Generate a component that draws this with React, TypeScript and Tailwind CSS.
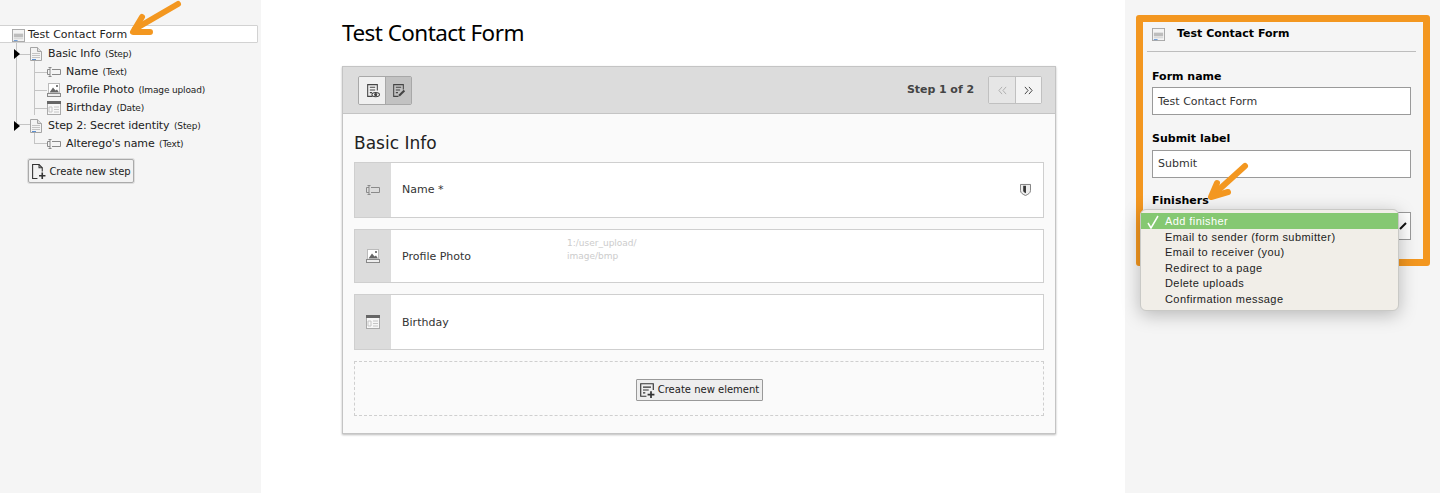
import type { ReactNode } from "react";

const verdana = "font-['DejaVu_Sans',sans-serif]";

function FormIcon({ className = "" }: { className?: string }) {
  return (
    <svg viewBox="0 0 14 14" className={className}>
      <rect x="0.5" y="0.5" width="13" height="13" fill="#f4f4f4" stroke="#a5a5a5" />
      <rect x="2" y="5" width="10" height="4" fill="#bdbdbd" />
      <rect x="2" y="10" width="10" height="1" fill="#d0d0d0" />
      <rect x="2" y="12" width="4" height="1" fill="#5b8fd0" />
    </svg>
  );
}

function PageIcon() {
  return (
    <svg viewBox="0 0 12 14" className="h-[14px] w-[12px] shrink-0">
      <path d="M.5.5h7l4 4v9H.5z" fill="#f3f3f3" stroke="#a5a5a5" />
      <path d="M7.5.5v4h4" fill="#ddd" stroke="#a5a5a5" />
      <path d="M2 6.5h8M2 8.5h8M2 10.5h8" stroke="#c4c4c4" />
      <path d="M2 12.5h4" stroke="#5b8fd0" />
    </svg>
  );
}

function TextIcon({ color = "#8a8a8a" }: { color?: string }) {
  return (
    <svg viewBox="0 0 14 10" className="h-[10px] w-[14px] shrink-0" fill="none" stroke={color}>
      <path d="M5 2.5h8.5v5H5" />
      <path d="M1.500.5h3M3 .5v9M1.500 9.500h3M.5 2.500H3M.5 7.500H3M.5 2.500v5" />
    </svg>
  );
}

function ImageIcon() {
  return (
    <svg viewBox="0 0 14 14" className="h-[14px] w-[14px] shrink-0">
      <rect x="1.5" y="0.5" width="11" height="10" fill="#fff" stroke="#bbb" />
      <path d="M2.500 9.500 6 4.500l2.500 3 1.500-1 2 3z" fill="#666" />
      <circle cx="10" cy="3" r="1" fill="#555" />
      <rect x="0.5" y="10.500" width="13" height="3" fill="#eee" stroke="#888" />
    </svg>
  );
}

function DateIcon() {
  return (
    <svg viewBox="0 0 14 14" className="h-[14px] w-[14px] shrink-0">
      <rect x="0.5" y="0.5" width="13" height="13" fill="#f7f7f7" stroke="#aaa" />
      <rect x="0" y="0" width="14" height="3" fill="#666" />
      <path d="M2 6h3v5H2z" fill="none" stroke="#c6c6c6" />
      <path d="M7 6h5M7 8.500h5M7 11h5" stroke="#c6c6c6" />
    </svg>
  );
}

function Twisty() {
  return <span className="block h-0 w-0 border-y-[5px] border-l-[6px] border-y-transparent border-l-black" />;
}

function TreeRow({
  left,
  icon,
  label,
  kind,
  arrow,
}: {
  left: string;
  icon: ReactNode;
  label: string;
  kind: string;
  arrow?: boolean;
}) {
  return (
    <div className={`relative flex h-[18px] items-center gap-[5px] ${left}`}>
      {arrow && (
        <span className="absolute left-[-15px] top-1/2 flex -translate-y-1/2">
          <Twisty />
        </span>
      )}
      <span className="flex w-[14px] justify-center">{icon}</span>
      <span className="whitespace-nowrap text-[11px] tracking-[-0.08px] text-[#222]">
        {label} <span className="ml-[1px] text-[9px] tracking-[-0.15px]">{kind}</span>
      </span>
    </div>
  );
}

function LeftTree() {
  return (
    <aside className={`relative w-[261px] shrink-0 bg-[#f5f5f5] pt-[25px] ${verdana}`}>
      <div className="ml-[-2px] flex h-[18px] w-[260px] items-center rounded-r-[1px] border border-[#d2d2d2] bg-white pl-[13px] pt-[3px] text-[11px] text-[#222]">
        <FormIcon className="mr-[3px] h-[13px] w-[13px]" />
        Test Contact Form
      </div>
      <div className="relative pl-[30px]">
        {/* tree connector lines */}
        <span className="absolute left-[16px] top-0 h-[82px] w-px bg-[#c4c4c4]" />
        <span className="absolute left-[16px] top-[11px] h-px w-[14px] bg-[#c4c4c4]" />
        <span className="absolute left-[16px] top-[81px] h-px w-[14px] bg-[#c4c4c4]" />
        <span className="absolute left-[34px] top-[18px] h-[54px] w-px bg-[#c4c4c4]" />
        <span className="absolute left-[34px] top-[29px] h-px w-[13px] bg-[#c4c4c4]" />
        <span className="absolute left-[34px] top-[47px] h-px w-[13px] bg-[#c4c4c4]" />
        <span className="absolute left-[34px] top-[65px] h-px w-[13px] bg-[#c4c4c4]" />
        <span className="absolute left-[34px] top-[90px] h-[10px] w-px bg-[#c4c4c4]" />
        <span className="absolute left-[34px] top-[100px] h-px w-[13px] bg-[#c4c4c4]" />
        <div className="pt-[2px]">
          <TreeRow left="ml-[-1px]" arrow icon={<PageIcon />} label="Basic Info" kind="(Step)" />
          <TreeRow left="ml-[17px]" icon={<TextIcon />} label="Name" kind="(Text)" />
          <TreeRow left="ml-[17px]" icon={<ImageIcon />} label="Profile Photo" kind="(Image upload)" />
          <TreeRow left="ml-[17px]" icon={<DateIcon />} label="Birthday" kind="(Date)" />
          <TreeRow left="ml-[-1px]" arrow icon={<PageIcon />} label="Step 2: Secret identity" kind="(Step)" />
          <TreeRow left="ml-[17px]" icon={<TextIcon />} label="Alterego's name" kind="(Text)" />
        </div>
      </div>
      <button className="ml-[28px] mt-[6px] flex h-[24px] w-[106px] items-center justify-center gap-[3px] rounded-[2px] border border-[#aaa] bg-[#f2f2f2] text-[10px] tracking-[-0.05px] text-[#222] shadow-[0_0_0_1px_#ddd]">
        <svg viewBox="0 0 14 14" className="h-[15px] w-[15px]" fill="none" stroke="#333">
          <path d="M6 13.500H1.500V.5h6l3 3V7" />
          <path d="M7.500.5v3h3" />
          <path d="M10.500 8v6M7.500 11h6" strokeWidth="1.500" />
        </svg>
        Create new step
      </button>
    </aside>
  );
}

function ElementRow({
  h,
  icon,
  label,
  pad = "",
  children,
}: {
  h: string;
  icon: ReactNode;
  label: string;
  pad?: string;
  children?: ReactNode;
}) {
  return (
    <div className={`relative flex ${h} border border-[#cfcfcf] bg-white`}>
      <div className="flex w-[36px] shrink-0 items-center justify-center bg-[#dcdcdc]">{icon}</div>
      <div className={`flex flex-1 items-center pl-[11px] text-[11px] text-[#333] ${pad}`}>{label}</div>
      {children}
    </div>
  );
}

function MainStage() {
  return (
    <main className="flex-1 pl-[81px] pt-[18px]">
      <h1 className="h-[30px] font-['Noto_Sans',sans-serif] text-[22.500px] leading-[29px] tracking-[-0.55px] text-black">
        Test Contact Form
      </h1>
      <div className={`mt-[18px] w-[714px] border border-[#c4c4c4] bg-[#fafafa] pb-[17px] shadow-[0_1px_2px_#bbb] ${verdana}`}>
        <div className="flex h-[47px] items-center border-b border-[#c4c4c4] bg-[#dcdcdc] pl-[15px] pr-[13px]">
          <div className="flex h-[29px] overflow-hidden rounded-[2px] border border-[#a8a8a8]">
            <button className="flex w-[26px] items-center justify-center bg-[#f0f0f0]">
              <svg viewBox="0 0 14 14" className="h-[15px] w-[15px]" fill="none" stroke="#444">
                <path d="M7 12.500H2.500v-11h9V7" />
                <path d="M4.500 4h5M4.500 6.500h5M4.500 9h2" />
                <ellipse cx="10" cy="10.800" rx="3.500" ry="2" fill="#fff" />
                <circle cx="10" cy="10.800" r="1" fill="#444" />
              </svg>
            </button>
            <button className="flex w-[26px] items-center justify-center border-l border-[#a8a8a8] bg-[#c2c2c2]">
              <svg viewBox="0 0 14 14" className="h-[15px] w-[15px]" fill="none" stroke="#444">
                <path d="M7 12.500H2.500v-11h9V6" />
                <path d="M4.500 4h5M4.500 6.500h4M4.500 9h2" />
                <path d="m7.500 12 5-5" strokeWidth="2" />
              </svg>
            </button>
          </div>
          <div className="ml-auto mr-[14px] text-[11px] font-bold tracking-[-0.05px] text-[#444]">Step 1 of 2</div>
          <div className="flex h-[28px] rounded-[2px] border border-[#c0c0c0]">
            <button className="flex w-[26px] items-center justify-center bg-[#e6e6e6] text-[#aaa]">
              <svg viewBox="0 0 10 10" className="h-[9px] w-[9px]" fill="none" stroke="currentColor">
                <path d="M4.500 1 1 5l3.500 4M9 1 5.500 5 9 9" />
              </svg>
            </button>
            <button className="flex w-[26px] items-center justify-center border-l border-[#c0c0c0] bg-[#f4f4f4] text-[#333]">
              <svg viewBox="0 0 10 10" className="h-[9px] w-[9px]" fill="none" stroke="currentColor">
                <path d="m1 1 3.500 4L1 9M5.500 1 9 5 5.500 9" />
              </svg>
            </button>
          </div>
        </div>
        <div className="px-[11px] pt-[18px]">
          <h2 className="mb-[7px] h-[23px] text-[17px] leading-[23px] text-[#222]">Basic Info</h2>
          <div className="flex flex-col gap-[11px]">
            <ElementRow h="h-[56px]" icon={<TextIcon />} label="Name *">
              <svg viewBox="0 0 12 14" className="absolute right-[12px] top-[20px] h-[13px] w-[11px]">
                <path d="M.5 1.500h11V8c0 3-3 4.500-5.500 5.500C3.500 12.500.5 11 .5 8z" fill="#eee" stroke="#777" />
                <path d="M3.500 3h3v8c-1.500-.5-3-1.500-3-3z" fill="#333" />
              </svg>
            </ElementRow>
            <ElementRow h="h-[54px]" pad="pt-[2px]" icon={<ImageIcon />} label="Profile Photo">
              <div className="absolute left-[212px] top-[7px] text-[9px] leading-[13px] text-[#ccc]">
                1:/user_upload/
                <br />
                image/bmp
              </div>
            </ElementRow>
            <ElementRow h="h-[56px]" pad="pt-[2px]" icon={<DateIcon />} label="Birthday" />
            <div className="flex h-[55px] items-center justify-center border border-dashed border-[#cfcfcf] pt-[2px]">
              <button className="flex h-[22px] w-[127px] items-center justify-center gap-[3px] rounded-[1px] border border-[#999] bg-[#eee] text-[10px] text-[#222]">
                <svg viewBox="0 0 14 14" className="h-[16px] w-[16px]" fill="none" stroke="#333">
                  <path d="M6.500 12.500h-5v-11h11V7" />
                  <path d="M3.500 4.500h7M3.500 7h5M3.500 9.500h2" />
                  <path d="M10.500 8v6M7.500 11h6" strokeWidth="1.500" />
                </svg>
                Create new element
              </button>
            </div>
          </div>
        </div>
      </div>
    </main>
  );
}

function TextField({
  label,
  value,
  mt,
  gap,
  pad = "",
}: {
  label: string;
  value: string;
  mt: string;
  gap: string;
  pad?: string;
}) {
  return (
    <div className={mt}>
      <div className="h-[14px] text-[11px] font-bold leading-[14px] text-black">{label}</div>
      <div className={`${gap} ${pad} flex h-[28px] w-[259px] items-center border border-[#9a9a9a] bg-white pl-[5px] text-[11px] text-[#333]`}>
        {value}
      </div>
    </div>
  );
}

function FinisherMenu() {
  const items = [
    "Email to sender (form submitter)",
    "Email to receiver (you)",
    "Redirect to a page",
    "Delete uploads",
    "Confirmation message",
  ];
  return (
    <div className="absolute left-[1140px] top-[209px] h-[102px] w-[259px] rounded-[6px] border border-[#c9c9c6] bg-[#f1eee8] pt-[3px] font-['Liberation_Sans',sans-serif] text-[11px] tracking-[0.42px] text-[#222] shadow-[0_4px_18px_rgba(0,0,0,0.25)]">
      <div className="relative flex h-[16px] items-center bg-[#85c872] pl-[24px] text-white">
        <svg viewBox="0 0 12 14" className="absolute left-[6px] top-[2px] h-[14px] w-[12px]" fill="none" stroke="#fff" strokeWidth="1.500">
          <path d="m1 8 3 5 7-12" />
        </svg>
        Add finisher
      </div>
      {items.map((item) => (
        <div key={item} className="flex h-[15.500px] items-center pl-[24px]">
          {item}
        </div>
      ))}
    </div>
  );
}

function Inspector() {
  return (
    <aside className="flex w-[315px] shrink-0 bg-[#f5f5f5] pl-[11px] pt-[15px]">
      <div className={`h-[251px] w-[294px] rounded-[3px] border-[7px] border-[#f39720] pl-[9px] ${verdana}`}>
        <div className="flex h-[22px] items-center pt-[3px]">
          <FormIcon className="h-[13px] w-[13px]" />
          <span className="ml-[12px] text-[11px] font-bold text-black">Test Contact Form</span>
        </div>
        <div className="ml-[-5px] mt-[7px] h-px w-[269px] bg-[#bdbdbd]" />
        <TextField mt="mt-[18px]" gap="mt-[3px]" pad="pt-[2px]" label="Form name" value="Test Contact Form" />
        <TextField mt="mt-[17px]" gap="mt-[4px]" label="Submit label" value="Submit" />
        <div className="mt-[16px] h-[14px] text-[11px] font-bold leading-[14px] text-black">Finishers</div>
        <div className="relative mt-[4px] h-[28px] w-[259px] border border-[#9a9a9a] bg-white">
          <svg viewBox="0 0 8 8" className="absolute right-[3px] top-[9px] h-[8px] w-[8px]" fill="none" stroke="#111" strokeWidth="2">
            <path d="m1 7 6-6" />
          </svg>
        </div>
      </div>
    </aside>
  );
}

function Arrow({ className, viewBox, shaft, head }: { className: string; viewBox: string; shaft: string; head: string }) {
  return (
    <svg viewBox={viewBox} className={`absolute ${className}`} fill="none" stroke="#f39720" strokeWidth="6" strokeLinecap="round" strokeLinejoin="round">
      <path d={shaft} />
      <path d={head} />
    </svg>
  );
}

export default function App() {
  return (
    <div className="relative flex h-[493px] w-[1440px] overflow-hidden bg-white">
      <LeftTree />
      <MainStage />
      <Inspector />
      <FinisherMenu />
      <Arrow
        className="left-[125px] top-0 h-[40px] w-[60px]"
        viewBox="0 0 60 40"
        shaft="M53 4 10 29"
        head="M17 17 8 32l17 0"
      />
      <Arrow
        className="left-[1204px] top-[160px] h-[44px] w-[48px]"
        viewBox="0 0 48 44"
        shaft="M41 6 9 35"
        head="M13 23 7 37l17-5"
      />
    </div>
  );
}
